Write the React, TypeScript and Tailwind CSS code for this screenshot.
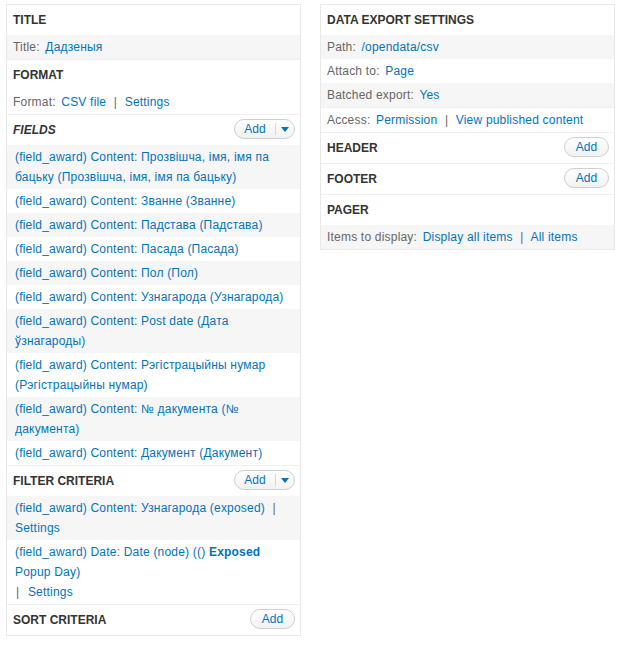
import { ReactNode } from 'react';
import clsx from 'clsx';

const linkCls = 'text-[#0074bd]';

function AddButton({ dropdown = false }: { dropdown?: boolean }) {
    return (
        <div className="mt-[4px] flex h-[20px] self-start rounded-full border border-[#cfcfcf] bg-linear-to-b from-white to-[#f2f2f2] text-[12px] leading-[18px] text-[#0074bd]">
            <span className={clsx('text-center', dropdown ? 'w-[40px]' : 'w-[43px]')}>Add</span>
            {dropdown && (
                <>
                    <span className="my-[3px] w-px bg-[#d8d8d8]" />
                    <span className="flex w-[18px] items-center justify-center">
                        <svg width="8" height="5" viewBox="0 0 8 5">
                            <polygon points="0,0 8,0 4,5" fill="#0074bd" />
                        </svg>
                    </span>
                </>
            )}
        </div>
    );
}

function BucketHeader({ title, italic = false, add, dropdown }: { title: string; italic?: boolean; add?: boolean; dropdown?: boolean }) {
    return (
        <div className="flex h-[30px] justify-between pl-[6px] pr-[5px]">
            <h3 className={clsx('self-center text-[12px] font-bold uppercase leading-[20px] text-[#333]', italic && 'italic')}>{title}</h3>
            {add && <AddButton dropdown={dropdown} />}
        </div>
    );
}

function Row({ gray = false, field = false, children }: { gray?: boolean; field?: boolean; children: ReactNode }) {
    return (
        <div
            className={clsx(
                'py-[2px] pr-[8px] leading-[20px] tracking-[0.2px]',
                gray ? 'bg-[#f6f6f6]' : 'bg-white',
                field ? 'pl-[8px]' : 'pl-[6px]',
            )}
        >
            {children}
        </div>
    );
}

function Label({ children }: { children: ReactNode }) {
    return <span className="mr-[2px] text-[#666]">{children}</span>;
}

function Sep({ lineStart = false }: { lineStart?: boolean }) {
    return <span className={clsx('text-[#666]', lineStart ? 'ml-[1px] mr-[5px]' : 'mx-[4px]')}>|</span>;
}

function Setting({ label, gray, links }: { label: string; gray?: boolean; links: string[] }) {
    return (
        <Row gray={gray}>
            <Label>{label}</Label>{' '}
            {links.map((l, i) => (
                <span key={l}>
                    {i > 0 && <> <Sep /> </>}
                    <a className={linkCls}>{l}</a>
                </span>
            ))}
        </Row>
    );
}

const fields = [
    'Прозвішча, імя, імя па бацьку (Прозвішча, імя, імя па бацьку)',
    'Званне (Званне)',
    'Падстава (Падстава)',
    'Пасада (Пасада)',
    'Пол (Пол)',
    'Узнагарода (Узнагарода)',
    'Post date (Дата ўзнагароды)',
    'Рэгістрацыйны нумар (Рэгістрацыйны нумар)',
    '№ дакумента (№ дакумента)',
    'Дакумент (Дакумент)',
];

function Panel({ children }: { children: ReactNode }) {
    return <div className="divide-y divide-[#f0f0f0] self-start border border-[#e9e9e9] bg-white">{children}</div>;
}

export default function App() {
    return (
        <div className="h-[665px] w-[622px] bg-white pl-[6px] pt-[4px] font-['Liberation_Sans',Arial,sans-serif] text-[12px]">
            <div className="grid grid-cols-[295px_295px] gap-x-[19px]">
                <Panel>
                    <div>
                        <BucketHeader title="Title" />
                        <Setting gray label="Title:" links={['Дадзеныя']} />
                    </div>
                    <div>
                        <BucketHeader title="Format" />
                        <Setting label="Format:" links={['CSV file', 'Settings']} />
                    </div>
                    <div>
                        <BucketHeader title="Fields" italic add dropdown />
                        {fields.map((f, i) => (
                            <Row key={f} field gray={i % 2 === 0}>
                                <a className={linkCls}>(field_award) Content: {f}</a>
                            </Row>
                        ))}
                    </div>
                    <div>
                        <BucketHeader title="Filter criteria" add dropdown />
                        <Row field gray>
                            <a className={clsx(linkCls, 'inline-block')}>(field_award) Content: Узнагарода (exposed)</a> <Sep />{' '}
                            <a className={linkCls}>Settings</a>
                        </Row>
                        <Row field>
                            <a className={clsx(linkCls, 'block')}>
                                (field_award) Date: Date (node) (() <strong>Exposed</strong> Popup Day)
                            </a>
                            <Sep lineStart /> <a className={linkCls}>Settings</a>
                        </Row>
                    </div>
                    <div>
                        <BucketHeader title="Sort criteria" add />
                    </div>
                </Panel>

                <Panel>
                    <div>
                        <BucketHeader title="Data export settings" />
                        <Setting gray label="Path:" links={['/opendata/csv']} />
                        <Setting label="Attach to:" links={['Page']} />
                        <Setting gray label="Batched export:" links={['Yes']} />
                    </div>
                    <div>
                        <Setting label="Access:" links={['Permission', 'View published content']} />
                    </div>
                    <div>
                        <BucketHeader title="Header" add />
                    </div>
                    <div>
                        <BucketHeader title="Footer" add />
                    </div>
                    <div>
                        <BucketHeader title="Pager" />
                        <Setting gray label="Items to display:" links={['Display all items', 'All items']} />
                    </div>
                </Panel>
            </div>
        </div>
    );
}
